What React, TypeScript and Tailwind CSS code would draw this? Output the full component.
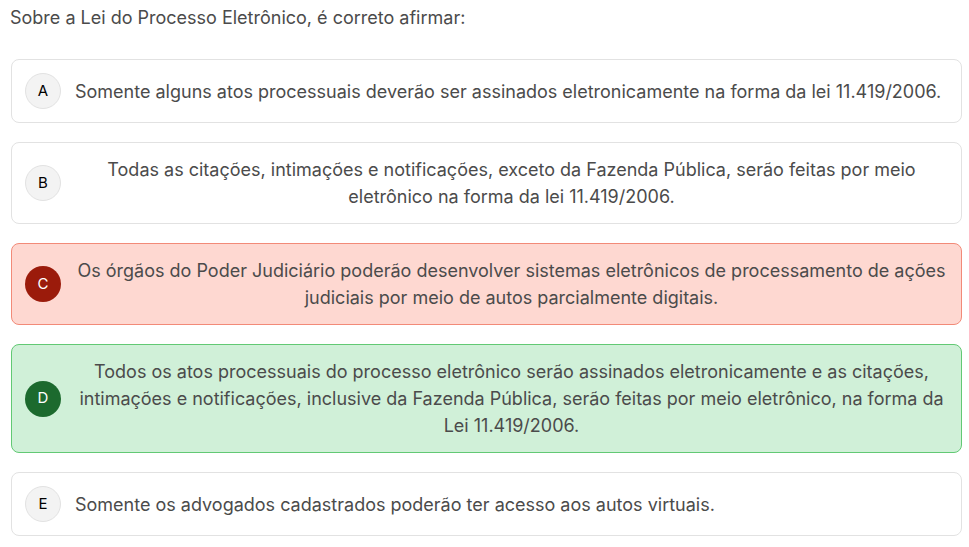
const options = [
  {
    letter: "A",
    text: "Somente alguns atos processuais deverão ser assinados eletronicamente na forma da lei 11.419/2006.",
    state: "idle",
  },
  {
    letter: "B",
    text: "Todas as citações, intimações e notificações, exceto da Fazenda Pública, serão feitas por meio eletrônico na forma da lei 11.419/2006.",
    state: "idle",
  },
  {
    letter: "C",
    text: "Os órgãos do Poder Judiciário poderão desenvolver sistemas eletrônicos de processamento de ações judiciais por meio de autos parcialmente digitais.",
    state: "wrong",
  },
  {
    letter: "D",
    text: "Todos os atos processuais do processo eletrônico serão assinados eletronicamente e as citações, intimações e notificações, inclusive da Fazenda Pública, serão feitas por meio eletrônico, na forma da Lei 11.419/2006.",
    state: "right",
  },
  {
    letter: "E",
    text: "Somente os advogados cadastrados poderão ter acesso aos autos virtuais.",
    state: "idle",
  },
];

const cardStyles: Record<string, string> = {
  idle: "bg-white border-[#e2e2e2]",
  wrong: "bg-[#fed8d1] border-[#f28a78]",
  right: "bg-[#d0f0d8] border-[#62c974]",
};

const badgeStyles: Record<string, string> = {
  idle: "bg-[#f3f3f3] border border-[#e2e2e2] text-black",
  wrong: "bg-[#9b1b0b] text-white",
  right: "bg-[#1c6a2e] text-white",
};

export default function App() {
  return (
    <div className="min-h-screen bg-white pl-[11px] pr-[7px] pt-[4px] font-['Inter',sans-serif] text-[#4b4b4b]">
      <div className="-ml-px text-[18px] leading-[27px]">
        Sobre a Lei do Processo Eletrônico, é correto afirmar:
      </div>
      <div className="mt-[28px] flex flex-col gap-[19px]">
        {options.map((o) => (
          <div
            key={o.letter}
            className={`flex items-center gap-[14px] rounded-lg border p-[13px] ${cardStyles[o.state]}`}
          >
            <div
              className={`flex h-9 w-9 shrink-0 items-center justify-center rounded-full text-[15px] ${badgeStyles[o.state]}`}
            >
              {o.letter}
            </div>
            <div className="text-center text-[18px] leading-[27px]">{o.text}</div>
          </div>
        ))}
      </div>
    </div>
  );
}
